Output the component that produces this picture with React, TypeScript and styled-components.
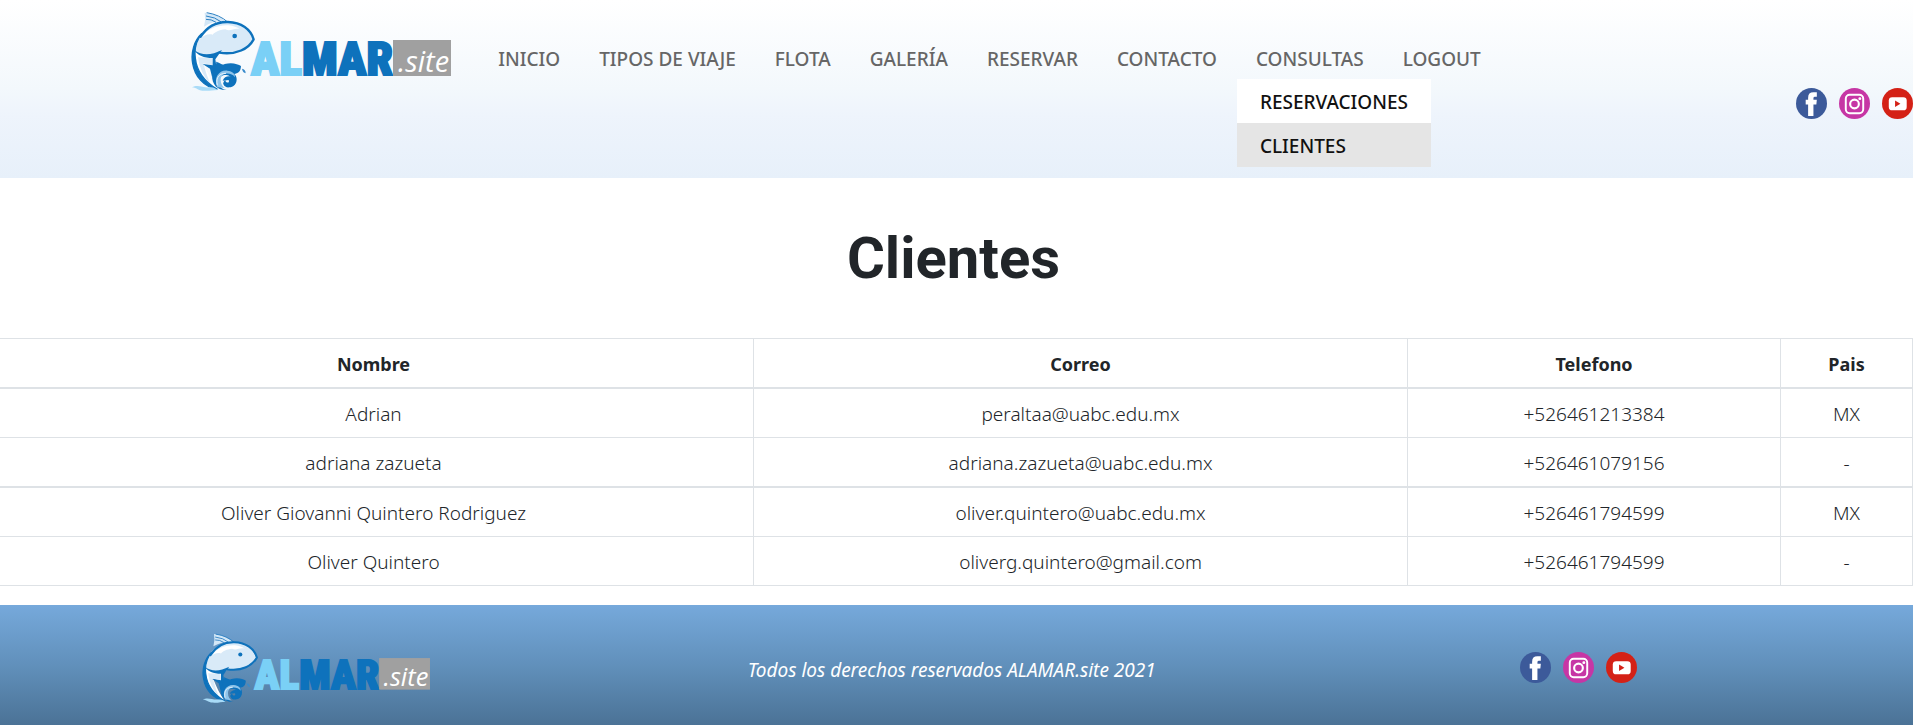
import React from "react";
import styled, { createGlobalStyle } from "styled-components";

const GlobalStyle = createGlobalStyle`
  * { box-sizing: border-box; }
  body {
    margin: 0;
    background: #fff;
    color: #212529;
    font-family: "Noto Sans", "Open Sans", sans-serif;
    font-size: 19px;
    line-height: 24px;
  }
`;

const Header = styled.header`
  display: flex;
  align-items: flex-start;
  justify-content: space-between;
  min-height: 178px;
  padding-left: 10%;
  background: linear-gradient(#ffffff, #f3f8fc 50%, #eef4fc 65%, #e7f0fa);
`;

const Brand = styled.div`
  display: flex;
  align-items: flex-start;
  gap: 28px;
`;

const LogoLink = styled.a<{ $top?: number }>`
  display: block;
  margin-top: ${(p) => p.$top ?? 0}px;
`;

const LogoSvg = styled.svg`
  display: block;
  height: auto;
`;

const LogoWord = styled.text`
  font-family: "Roboto Condensed", Roboto, sans-serif;
  font-size: 47px;
  font-weight: 900;
  stroke-width: 2px;
`;

const LogoSuffix = styled.text`
  font-family: "Open Sans", sans-serif;
  font-size: 29px;
  font-style: italic;
  fill: #fff;
`;

const Menu = styled.ul`
  display: flex;
  gap: 1px;
  margin: 36px 0 0;
  padding: 0;
  list-style: none;
`;

const MenuItem = styled.li`
  position: relative;
`;

const MenuLink = styled.a`
  display: block;
  padding: 11px 19px 8px;
  color: #666;
  font-weight: 500;
  text-decoration: none;
  white-space: nowrap;
`;

const SubMenu = styled.ul`
  position: absolute;
  top: 100%;
  left: 0;
  margin: 0;
  padding: 0;
  background: #fff;
  list-style: none;
`;

const SubLink = styled(MenuLink)<{ $active?: boolean }>`
  padding: 11px 23px 9px;
  color: #111;
  background: ${(p) => (p.$active ? "#e5e5e5" : "#fff")};
`;

const SocialList = styled.div<{ $top?: number }>`
  display: flex;
  gap: 12px;
  margin-top: ${(p) => p.$top ?? 0}px;
`;

const SocialLink = styled.a`
  display: block;
  width: 31px;
  height: 31px;
`;

const SocialIcon = styled.svg`
  display: block;
  width: 100%;
  height: 100%;
`;

const Title = styled.h1`
  margin: 44px 0;
  padding-right: 6px;
  font-family: Roboto, sans-serif;
  font-size: 58px;
  font-weight: 700;
  line-height: 72px;
  text-align: center;
`;

const Table = styled.table`
  width: 100%;
  margin-bottom: 19px;
  border-collapse: collapse;
  text-align: center;

  th:first-child,
  td:first-child {
    padding-right: 18px;
    border-left: 0;
  }
`;

const Th = styled.th<{ $width: string }>`
  width: ${(p) => p.$width};
  padding: 13px 12px 11px;
  border: 1px solid #dee2e6;
  border-bottom-width: 2px;
  font-size: 18px;
  font-weight: 700;
`;

const Td = styled.td`
  padding: 13px 12px 11px;
  border: 1px solid #dee2e6;
  font-weight: 300;
`;

const Group = styled.tbody`
  & + & { border-top: 2px solid #dee2e6; }
`;

const Footer = styled.footer`
  display: grid;
  grid-template-columns: 33% 33.5% 32%;
  align-items: center;
  justify-items: center;
  min-height: 120px;
  padding-top: 4px;
  background: linear-gradient(#76a9db, #6190bb 50%, #4b7296);
`;

const Rights = styled.p`
  margin: 0;
  padding-top: 6px;
  color: #fff;
  font-style: italic;
`;

function Logo({ width }: { width: number }) {
  return (
    <LogoSvg width={width} viewBox="0 0 260 84" role="img" aria-label="ALMAR.site">
      <g transform="translate(-3 0) scale(0.3333)">
        <path d="M50 14 Q54 35 48 56 Q75 38 112 40 Q90 18 50 14Z" fill="#d3e7f7" />
        <path d="M56 14 Q95 20 120 43 M54 24 Q82 27 100 42 M54 34 Q70 33 84 43" fill="none" stroke="#2a7fc2" strokeWidth="3" />
        <path d="M18 130 C24 78 62 44 118 44 C158 45 184 66 194 94 C178 124 146 138 92 134 C64 144 38 144 18 130Z" fill="#d9eaf8" />
        <path d="M38 92 C52 66 86 50 122 52 C136 53 148 58 156 64 C138 58 128 72 112 64 C92 66 82 72 74 80 C62 76 46 82 38 92Z" fill="#fff" />
        <path d="M18 130 C40 146 66 146 98 132 L76 156 L80 178 L46 166 C56 184 62 208 84 238 C44 230 14 190 18 130Z" fill="#fff" />
        <path d="M30 148 Q36 196 66 226 Q54 198 46 166 L74 172 L72 150Z" fill="#d9eaf8" />
        <path d="M38 86 C60 52 90 41 120 42 C160 43 188 64 197 94 C182 122 146 142 94 134" fill="none" stroke="#0e72bc" strokeWidth="7" strokeLinejoin="round" strokeLinecap="round" />
        <path d="M42 76 C18 98 8 134 14 166 C20 204 46 236 88 244 C48 220 26 190 22 150 C18 122 26 96 42 76Z" fill="#0e72bc" stroke="#0e72bc" strokeWidth="4" />
        <path d="M19 126 C42 144 70 142 102 126 L82 154 L86 180 L72 206 L66 182 L44 168 L74 172 L74 150 C48 150 28 142 19 126Z" fill="#0e72bc" />
        <path d="M72 202 C84 176 88 160 82 160 C100 168 104 172 110 168 C132 162 150 168 159 174 C158 192 150 196 138 198 C152 206 148 238 124 238 C108 240 100 224 112 216 C112 228 132 226 130 212 C128 198 96 194 92 218 C90 236 104 244 116 246 C90 248 72 232 72 202Z" fill="#0e72bc" />
        <path d="M88 238 C76 210 92 186 118 188 C134 189 142 198 141 208 C130 192 98 192 98 216 C98 228 104 236 110 240Z" fill="#8fc4ea" />
        <path d="M88 232 C82 206 96 196 114 196" fill="none" stroke="#e8f4fc" strokeWidth="3" />
        <path d="M104 218 C112 196 146 204 140 226 C134 242 108 238 106 224 C116 232 126 226 122 216Z" fill="#0e72bc" />
        <path d="M162 182 Q173 184 173 196 Q164 194 162 182Z" fill="#3a8bcb" />
        <path d="M12 238 C30 228 44 240 64 238 C76 236 84 242 90 246 C72 246 62 250 46 248 C34 250 28 240 12 238Z" fill="#a9dbf7" />
        <circle cx="140" cy="84" r="7" fill="#0e72bc" />
      </g>
      <LogoWord x="60" y="67" fill="#7ad0f6" stroke="#7ad0f6">AL</LogoWord>
      <LogoWord x="111" y="67" fill="#0e72bc" stroke="#0e72bc">MAR</LogoWord>
      <rect x="202" y="32" width="58" height="36" fill="#a0a0a0" />
      <LogoSuffix x="207" y="64">.site</LogoSuffix>
    </LogoSvg>
  );
}

function Socials({ top }: { top?: number }) {
  return (
    <SocialList $top={top}>
      <SocialLink href="#facebook" aria-label="Facebook">
        <SocialIcon viewBox="0 0 32 32">
          <circle cx="16" cy="16" r="16" fill="#3c5a9a" />
          <path d="M12.500 29V17h-2.500v-5h2.500V10q0-5.500 5.500-5.500H21.500v4.500h-2q-1.500 0-1.500 1.500v1.500H21.500l-.5 5h-3V29z" fill="#fff" />
        </SocialIcon>
      </SocialLink>
      <SocialLink href="#instagram" aria-label="Instagram">
        <SocialIcon viewBox="0 0 32 32">
          <circle cx="16" cy="16" r="16" fill="#c636a5" />
          <rect x="7" y="7" width="18" height="19" rx="4" fill="none" stroke="#fff" strokeWidth="2" />
          <circle cx="16" cy="16.500" r="4.500" fill="none" stroke="#fff" strokeWidth="2.200" />
          <circle cx="21.500" cy="11" r="1.500" fill="#fff" />
        </SocialIcon>
      </SocialLink>
      <SocialLink href="#youtube" aria-label="YouTube">
        <SocialIcon viewBox="0 0 32 32">
          <circle cx="16" cy="16" r="16" fill="#d42116" />
          <rect x="7" y="9.500" width="18.500" height="13.500" rx="3.500" fill="#fff" />
          <path d="M13.500 13v6.500l5.500-3.200z" fill="#d42116" />
        </SocialIcon>
      </SocialLink>
    </SocialList>
  );
}

const LINKS = ["INICIO", "TIPOS DE VIAJE", "FLOTA", "GALERÍA", "RESERVAR", "CONTACTO", "CONSULTAS", "LOGOUT"];

const GROUPS = [
  [
    ["Adrian", "peraltaa@uabc.edu.mx", "+526461213384", "MX"],
    ["adriana zazueta", "adriana.zazueta@uabc.edu.mx", "+526461079156", "-"],
  ],
  [
    ["Oliver Giovanni Quintero Rodriguez", "oliver.quintero@uabc.edu.mx", "+526461794599", "MX"],
    ["Oliver Quintero", "oliverg.quintero@gmail.com", "+526461794599", "-"],
  ],
];

export default function App() {
  return (
    <>
      <GlobalStyle />
      <Header>
        <Brand>
          <LogoLink href="#inicio" $top={8}><Logo width={260} /></LogoLink>
          <nav>
            <Menu>
              {LINKS.map((label) => (
                <MenuItem key={label}>
                  <MenuLink href="#">{label}</MenuLink>
                  {label === "CONSULTAS" && (
                    <SubMenu>
                      <li><SubLink href="#">RESERVACIONES</SubLink></li>
                      <li><SubLink href="#" $active>CLIENTES</SubLink></li>
                    </SubMenu>
                  )}
                </MenuItem>
              ))}
            </Menu>
          </nav>
        </Brand>
        <Socials top={88} />
      </Header>
      <main>
        <Title>Clientes</Title>
        <Table>
          <thead>
            <tr>
              <Th $width="39.4%">Nombre</Th>
              <Th $width="34.2%">Correo</Th>
              <Th $width="19.5%">Telefono</Th>
              <Th $width="6.9%">Pais</Th>
            </tr>
          </thead>
          {GROUPS.map((rows, g) => (
            <Group key={g}>
              {rows.map((row) => (
                <tr key={row[0]}>{row.map((cell, i) => <Td key={i}>{cell}</Td>)}</tr>
              ))}
            </Group>
          ))}
        </Table>
      </main>
      <Footer>
        <LogoLink href="#inicio"><Logo width={228} /></LogoLink>
        <Rights>Todos los derechos reservados ALAMAR.site 2021</Rights>
        <Socials />
      </Footer>
    </>
  );
}
